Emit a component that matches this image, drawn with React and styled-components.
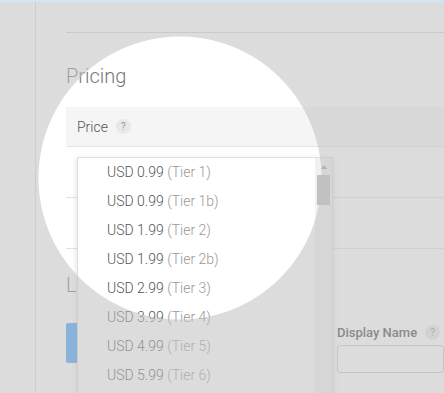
import styled, { createGlobalStyle } from 'styled-components';

const tiers = [
    ['0.99', '1'], ['0.99', '1b'], ['1.99', '2'], ['1.99', '2b'],
    ['2.99', '3'], ['3.99', '4'], ['4.99', '5'], ['5.99', '6'],
    ['6.99', '7'], ['7.99', '8'],
];

const App = () => {
  return (
    <>
        <GlobalStyle />
        <TopBar />
        <Layout>
            <Sidebar />
            <Content>
                <Divider />
                <SectionTitle>Pricing</SectionTitle>
                <Table>
                    <HeaderRow>
                        Price <Help>?</Help>
                    </HeaderRow>
                    <Row>
                        <SelectWrap>
                            <OptionList>
                                <Options>
                                    {tiers.map(([price, tier]) => (
                                        <Option key={tier}>
                                            USD {price} <Tier>(Tier {tier})</Tier>
                                        </Option>
                                    ))}
                                </Options>
                                <Scrollbar>
                                    <ArrowUp />
                                    <Thumb />
                                </Scrollbar>
                            </OptionList>
                        </SelectWrap>
                    </Row>
                    <Row />
                </Table>
                <SectionTitle $top={24}>Localization</SectionTitle>
                <Localization>
                    <BlueButton />
                    <Field>
                        <Label>Display Name <Help>?</Help></Label>
                        <Input />
                    </Field>
                </Localization>
            </Content>
        </Layout>
        {/* zoom spotlight over the page */}
        <Spotlight />
    </>
  )
}

export default App;


const GlobalStyle = createGlobalStyle`
    body {
        margin: 0;
        background: #fff;
        font-family: Roboto, "Liberation Sans", sans-serif;
        overflow: hidden;
    }
`;

const TopBar = styled.div`
    height: 2px;
    background-color: #cfe6f7;
`;

const Layout = styled.div`
    display: flex;
    height: 391px;
`;

const Sidebar = styled.div`
    width: 35px;
    flex-shrink: 0;
    border-right: 1px solid #dadada;
`;

const Content = styled.div`
    flex: 1;
    padding: 30px 0 0 30px;
    min-width: 0;
`;

const Divider = styled.div`
    height: 1px;
    background-color: #d3d3d3;
`;

const SectionTitle = styled.h2`
    margin: ${p => p.$top || 31}px 0 19px;
    font-size: 20px;
    line-height: 24px;
    font-weight: 300;
    color: #777;
`;

const Table = styled.div`
    display: flex;
    flex-direction: column;
`;

const HeaderRow = styled.div`
    height: 39px;
    display: flex;
    align-items: center;
    gap: 8px;
    padding-left: 11px;
    background-color: #f5f5f5;
    border-bottom: 1px solid #e6e6e6;
    font-size: 14px;
    font-weight: 300;
    color: #555;
`;

const Row = styled.div`
    height: 51px;
    box-sizing: border-box;
    border-bottom: 1px solid #e3e3e3;
    padding: 10px 0 0 11px;
`;

const Help = styled.span`
    width: 15px;
    height: 15px;
    border-radius: 50%;
    background-color: #e8e8e8;
    color: #999;
    font-size: 10px;
    font-weight: 400;
    display: inline-flex;
    align-items: center;
    justify-content: center;
`;

const SelectWrap = styled.div`
    position: relative;
`;

const OptionList = styled.div`
    position: absolute;
    top: 0;
    left: 0;
    width: 256px;
    height: 260px;
    display: flex;
    background-color: #fff;
    border: 1px solid #e0e0e0;
    box-sizing: border-box;
    box-shadow: 0 2px 6px rgba(0, 0, 0, 0.14);
    z-index: 5;
    overflow: hidden;
`;

const Options = styled.div`
    flex: 1;
`;

const Option = styled.div`
    height: 29px;
    line-height: 29px;
    padding-left: 29px;
    font-size: 14px;
    font-weight: 300;
    color: #555;
    white-space: nowrap;
`;

const Tier = styled.span`
    color: #999;
`;

const Scrollbar = styled.div`
    width: 17px;
    flex-shrink: 0;
    background-color: #f1f1f1;
    display: flex;
    flex-direction: column;
    align-items: center;
    padding-top: 7px;
`;

const ArrowUp = styled.div`
    width: 0;
    height: 0;
    border-left: 3.5px solid transparent;
    border-right: 3.5px solid transparent;
    border-bottom: 4px solid #a3a3a3;
`;

const Thumb = styled.div`
    width: 13px;
    height: 30px;
    margin-top: 6px;
    background-color: #c1c1c1;
`;

const Localization = styled.div`
    display: grid;
    grid-template-columns: 271px 1fr;
    margin-top: 26px;
`;

const BlueButton = styled.div`
    width: 200px;
    height: 40px;
    background-color: #45a3fe;
    border-radius: 2px;
`;

const Field = styled.div`
    display: flex;
    flex-direction: column;
    gap: 5px;
    padding-top: 2px;
`;

const Label = styled.label`
    display: flex;
    align-items: center;
    gap: 8px;
    font-size: 13px;
    font-weight: 500;
    color: #444;
`;

const Input = styled.div`
    height: 28px;
    border: 1px solid #c8c8c8;
    border-radius: 3px;
    box-sizing: border-box;
`;

const Spotlight = styled.div`
    position: fixed;
    top: 2px;
    left: 0;
    right: 0;
    bottom: 0;
    pointer-events: none;
    z-index: 10;
    background: radial-gradient(circle 142px at 180px 176px, transparent 141px, rgba(193, 193, 193, 0.56) 142px);
`;
